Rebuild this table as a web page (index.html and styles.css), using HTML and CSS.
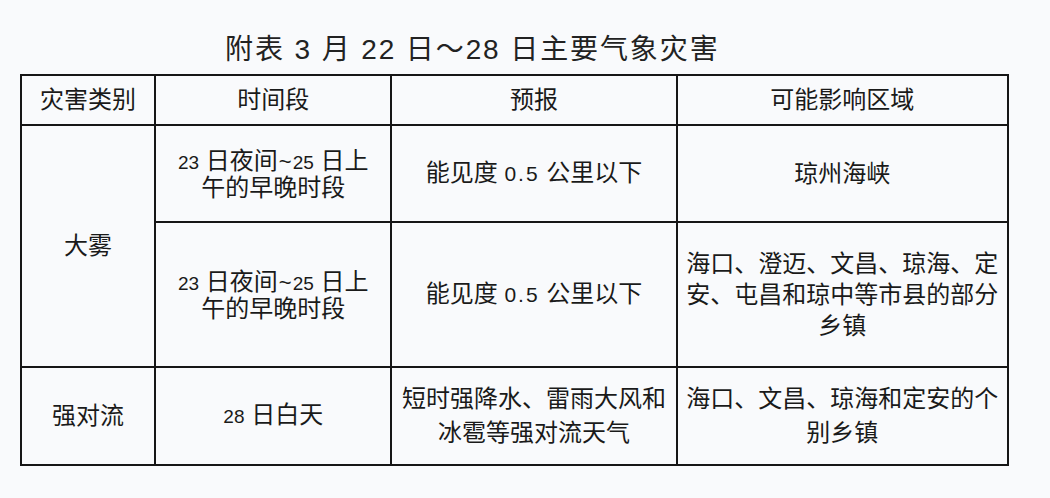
FILE: index.html
```html
<!DOCTYPE html>
<html lang="zh-CN">
<head>
<meta charset="utf-8">
<title>附表 3 月 22 日～28 日主要气象灾害</title>
<link rel="stylesheet" href="styles.css">
</head>
<body>
<div class="page">
  <h1 class="title">附表 3 月 22 日～28 日主要气象灾害</h1>
  <table class="grid">
    <colgroup>
      <col class="c1"><col class="c2"><col class="c3"><col class="c4">
    </colgroup>
    <tr class="head">
      <td>灾害类别</td>
      <td>时间段</td>
      <td>预报</td>
      <td>可能影响区域</td>
    </tr>
    <tr class="r1">
      <td rowspan="2" class="kind">大雾</td>
      <td class="tight"><span class="num">23</span> 日夜间<span class="tilde">~</span><span class="num">25</span> 日上<br>午的早晚时段</td>
      <td>能见度 <span class="lat">0.5</span> 公里以下</td>
      <td>琼州海峡</td>
    </tr>
    <tr class="r2">
      <td class="tight"><span class="num">23</span> 日夜间<span class="tilde">~</span><span class="num">25</span> 日上<br>午的早晚时段</td>
      <td>能见度 <span class="lat">0.5</span> 公里以下</td>
      <td class="mid">海口、澄迈、文昌、琼海、定<br>安、屯昌和琼中等市县的部分<br>乡镇</td>
    </tr>
    <tr class="r3">
      <td>强对流</td>
      <td><span class="num">28</span> 日白天</td>
      <td class="loose">短时强降水、雷雨大风和<br>冰雹等强对流天气</td>
      <td class="loose">海口、文昌、琼海和定安的个<br>别乡镇</td>
    </tr>
  </table>
</div>
</body>
</html>
```

FILE: styles.css
```css
html, body {
  margin: 0;
  padding: 0;
  background: #f9fafc;
}

.page {
  width: 1050px;
  height: 498px;
  padding: 0 0 0 20px;
  box-sizing: border-box;
  font-family: "Liberation Sans", "Noto Sans CJK SC", sans-serif;
  color: #1a1a1a;
}

.title {
  margin: 0;
  padding: 33px 0 0 205px;
  height: 41px;
  box-sizing: content-box;
  font-size: 28px;
  line-height: 34px;
  font-weight: normal;
  letter-spacing: 1.9px;
  color: #222;
  white-space: nowrap;
}

.grid {
  border-collapse: collapse;
  table-layout: fixed;
  width: 989px;
  font-size: 24px;
  line-height: 30px;
}

.c1 { width: 134px; }
.c2 { width: 236px; }
.c3 { width: 285px; }
.c4 { width: 331px; }

.grid td {
  border: 2px solid #161616;
  text-align: center;
  vertical-align: middle;
  padding: 0 2px;
  white-space: nowrap;
}

.head td { height: 48px; }
.r1 td { height: 95px; }
.r2 td { height: 143px; }
.r3 td { height: 96px; }

.grid td.tight { line-height: 25px; }
.grid td.mid { line-height: 31px; }
.grid td.loose { line-height: 34px; }

.num {
  font-size: 19px;
}

.tilde {
  font-size: 22px;
  margin: 0 1px;
}

.lat {
  font-size: 21px;
  letter-spacing: 2px;
}
```
